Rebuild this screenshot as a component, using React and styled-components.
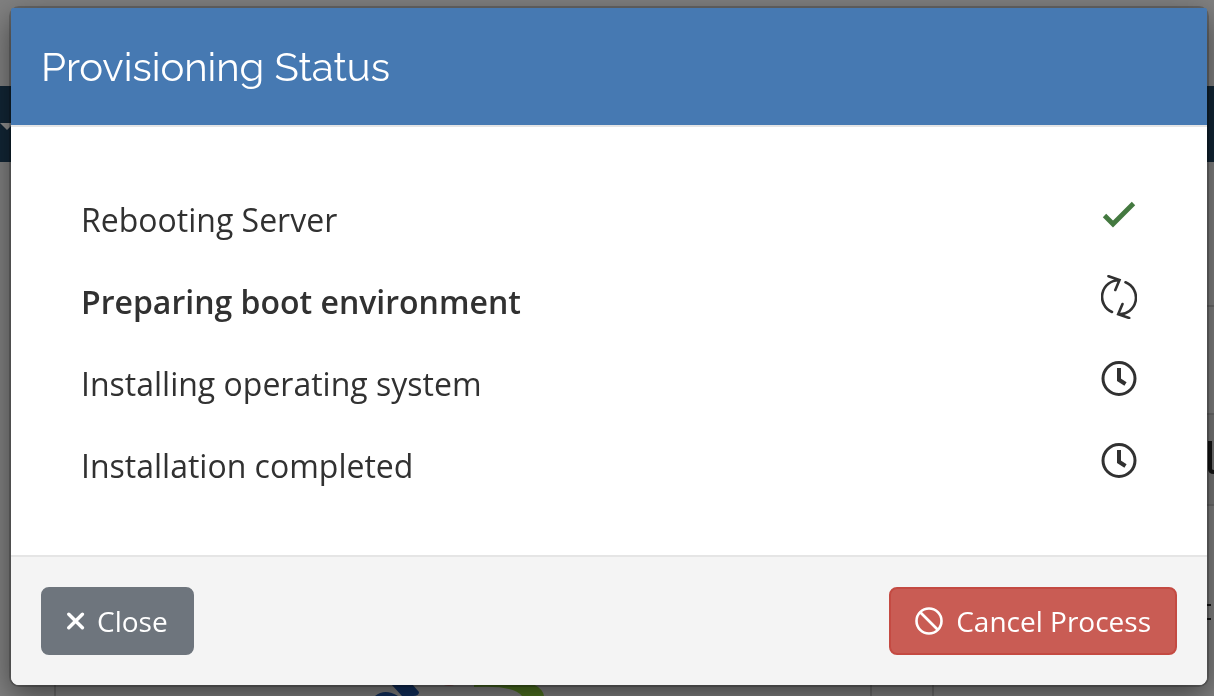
import React from "react";
import styled, { createGlobalStyle } from "styled-components";

const GlobalStyle = createGlobalStyle`
  *, *::before, *::after { box-sizing: border-box; }
  body {
    margin: 0;
    overflow: hidden;
    background: #808080;
    color: #313131;
    font-family: "Open Sans", "Noto Sans", sans-serif;
  }
`;

const Page = styled.div`
  height: 100vh;
  overflow: hidden;
  display: flex;
  flex-direction: column;
  background: #808080;
`;

const TopBar = styled.div`
  flex: 0 0 86px;
`;

const NavBar = styled.div`
  flex: 0 0 76px;
  display: flex;
  align-items: center;
  padding-top: 4px;
  background: #122636;
`;

const NavCaret = styled.span`
  border: 7px solid transparent;
  border-top-color: #909090;
  border-bottom: 0;
`;

const Columns = styled.div`
  flex: 1;
  min-height: 0;
  display: flex;
  gap: 60px;
  padding-left: 54px;
`;

const MainCard = styled.div`
  flex: 1;
  min-width: 0;
  display: flex;
  align-items: flex-end;
  justify-content: center;
  border: 2px solid #6b6b6b;
  border-width: 0 2px;
`;

const SideCard = styled.div`
  flex: 0 0 282px;
  display: flex;
  flex-direction: column;
  border-left: 2px solid #6b6b6b;
`;

const SideRow = styled.div`
  flex: 0 0 ${(p) => p.$height}px;
  display: flex;
  align-items: center;
  justify-content: flex-end;
  border-bottom: 2px solid #6b6b6b;
  background: ${(p) => (p.$shaded ? "#787878" : "transparent")};
`;

const Backdrop = styled.div`
  position: fixed;
  inset: 0;
  padding: 8px 7px 11px 11px;
  display: flex;
`;

const Modal = styled.section`
  flex: 1;
  min-width: 0;
  display: flex;
  flex-direction: column;
  border-radius: 8px;
  background: #fff;
  box-shadow: 0 0 0 2px rgba(0, 0, 0, 0.2), 0 10px 30px rgba(0, 0, 0, 0.5);
`;

const ModalHeader = styled.header`
  padding: 30px;
  border-bottom: 2px solid #e5e5e5;
  border-radius: 2px 2px 0 0;
  background: #4679b2;
`;

const Title = styled.h1`
  margin: 0;
  color: #fff;
  font: 400 40px/57px Raleway, Lato, sans-serif;
`;

const Steps = styled.ul`
  flex: 1;
  margin: 0;
  padding: 52px 70px 48px;
  list-style: none;
`;

const Step = styled.li`
  height: 82px;
  display: flex;
  align-items: center;
  justify-content: space-between;
  font-size: 32px;
  line-height: 48px;
  font-weight: ${(p) => (p.$active ? 600 : 400)};
`;

const StepIcon = styled.svg`
  flex: none;
  width: 36px;
  height: 54px;
  padding-bottom: 10px;
  fill: none;
  stroke: ${(p) => p.$color || "#313131"};
`;

const ModalFooter = styled.footer`
  display: flex;
  justify-content: space-between;
  padding: 30px;
  border-top: 2px solid #e5e5e5;
  border-radius: 0 0 8px 8px;
  background: #f4f4f4;
`;

const Button = styled.button`
  display: flex;
  align-items: center;
  gap: 12px;
  height: 68px;
  padding: 0 24px;
  border: 2px solid ${(p) => p.$border};
  border-radius: 8px;
  background: ${(p) => p.$fill};
  color: #fff;
  font: 400 28px/40px "Open Sans", "Noto Sans", sans-serif;
  cursor: pointer;

  svg {
    flex: none;
    fill: none;
    stroke: currentColor;
  }
`;

function CheckIcon() {
  return (
    <StepIcon viewBox="0 0 36 44" $color="#447940" role="img" aria-label="Done">
      <path d="M3.500 22.500L12 31L32.500 10.500" strokeWidth="4.800" />
    </StepIcon>
  );
}

function SyncIcon() {
  return (
    <StepIcon viewBox="0 0 36 44" strokeWidth="2.6" strokeLinecap="round" role="img" aria-label="In progress">
      <path d="M11 37A16.600 16.600 0 0 1 18 5.200M7.500 1.200L18.500 5L14.300 15" />
      <path d="M24.500 7.300A16.600 16.600 0 0 1 17.500 39.300M28.200 43L17.200 39.300L21.500 29" />
    </StepIcon>
  );
}

function ClockIcon() {
  return (
    <StepIcon viewBox="0 0 36 44" role="img" aria-label="Waiting">
      <circle cx="18" cy="21.500" r="16" strokeWidth="3" />
      <path d="M18 11V22.800L24.500 27" strokeWidth="4" />
    </StepIcon>
  );
}

const STEPS = [
  { label: "Rebooting Server", Icon: CheckIcon },
  { label: "Preparing boot environment", Icon: SyncIcon, active: true },
  { label: "Installing operating system", Icon: ClockIcon },
  { label: "Installation completed", Icon: ClockIcon },
];

function PageBehind() {
  return (
    <Page aria-hidden="true">
      <TopBar />
      <NavBar>
        <NavCaret />
      </NavBar>
      <Columns>
        <MainCard>
          <svg width="176" height="12" viewBox="0 0 176 12">
            <path d="M0 12Q10 4 23 12Z" fill="#12305f" />
            <path d="M16 0H37L44 8Q44 12 38 12H27Z" fill="#12305f" />
            <path d="M66 0H82Q74 3 66 0Z" fill="#7a2222" />
            <path d="M99 0H158Q168 5 169 12H147Q139 1 99 3Z" fill="#4e7320" />
          </svg>
        </MainCard>
        <SideCard>
          <SideRow $height={145} />
          <SideRow $height={108} />
          <SideRow $height={91} $shaded>
            <svg width="6" height="38" viewBox="0 0 6 38">
              <path d="M2 0V28Q2 31 6 31" fill="none" stroke="#151515" strokeWidth="4" />
            </svg>
          </SideRow>
          <SideRow $height={214}>
            <svg width="7" height="16" viewBox="0 0 7 16">
              <path d="M0 1H4M0 15H4" stroke="#151515" strokeWidth="2" />
            </svg>
          </SideRow>
        </SideCard>
      </Columns>
    </Page>
  );
}

export default function App() {
  return (
    <>
      <GlobalStyle />
      <PageBehind />
      <Backdrop>
        <Modal role="dialog" aria-modal="true" aria-labelledby="status-title">
          <ModalHeader>
            <Title id="status-title">Provisioning Status</Title>
          </ModalHeader>
          <Steps>
            {STEPS.map(({ label, Icon, active }) => (
              <Step key={label} $active={active}>
                {label}
                <Icon />
              </Step>
            ))}
          </Steps>
          <ModalFooter>
            <Button type="button" $fill="#6e757d" $border="#6e757d">
              <svg width="18" height="20" viewBox="0 0 18 20" aria-hidden="true">
                <path d="M1.800 3.200L15.400 16.800M15.400 3.200L1.800 16.800" strokeWidth="3.400" strokeLinecap="round" />
              </svg>
              Close
            </Button>
            <Button type="button" $fill="#c95c54" $border="#c44a42">
              <svg width="29" height="28" viewBox="0 0 29 28" aria-hidden="true">
                <circle cx="14" cy="14" r="12.500" strokeWidth="2.600" />
                <path d="M5 5L23 23" strokeWidth="2.600" />
              </svg>
              Cancel Process
            </Button>
          </ModalFooter>
        </Modal>
      </Backdrop>
    </>
  );
}
